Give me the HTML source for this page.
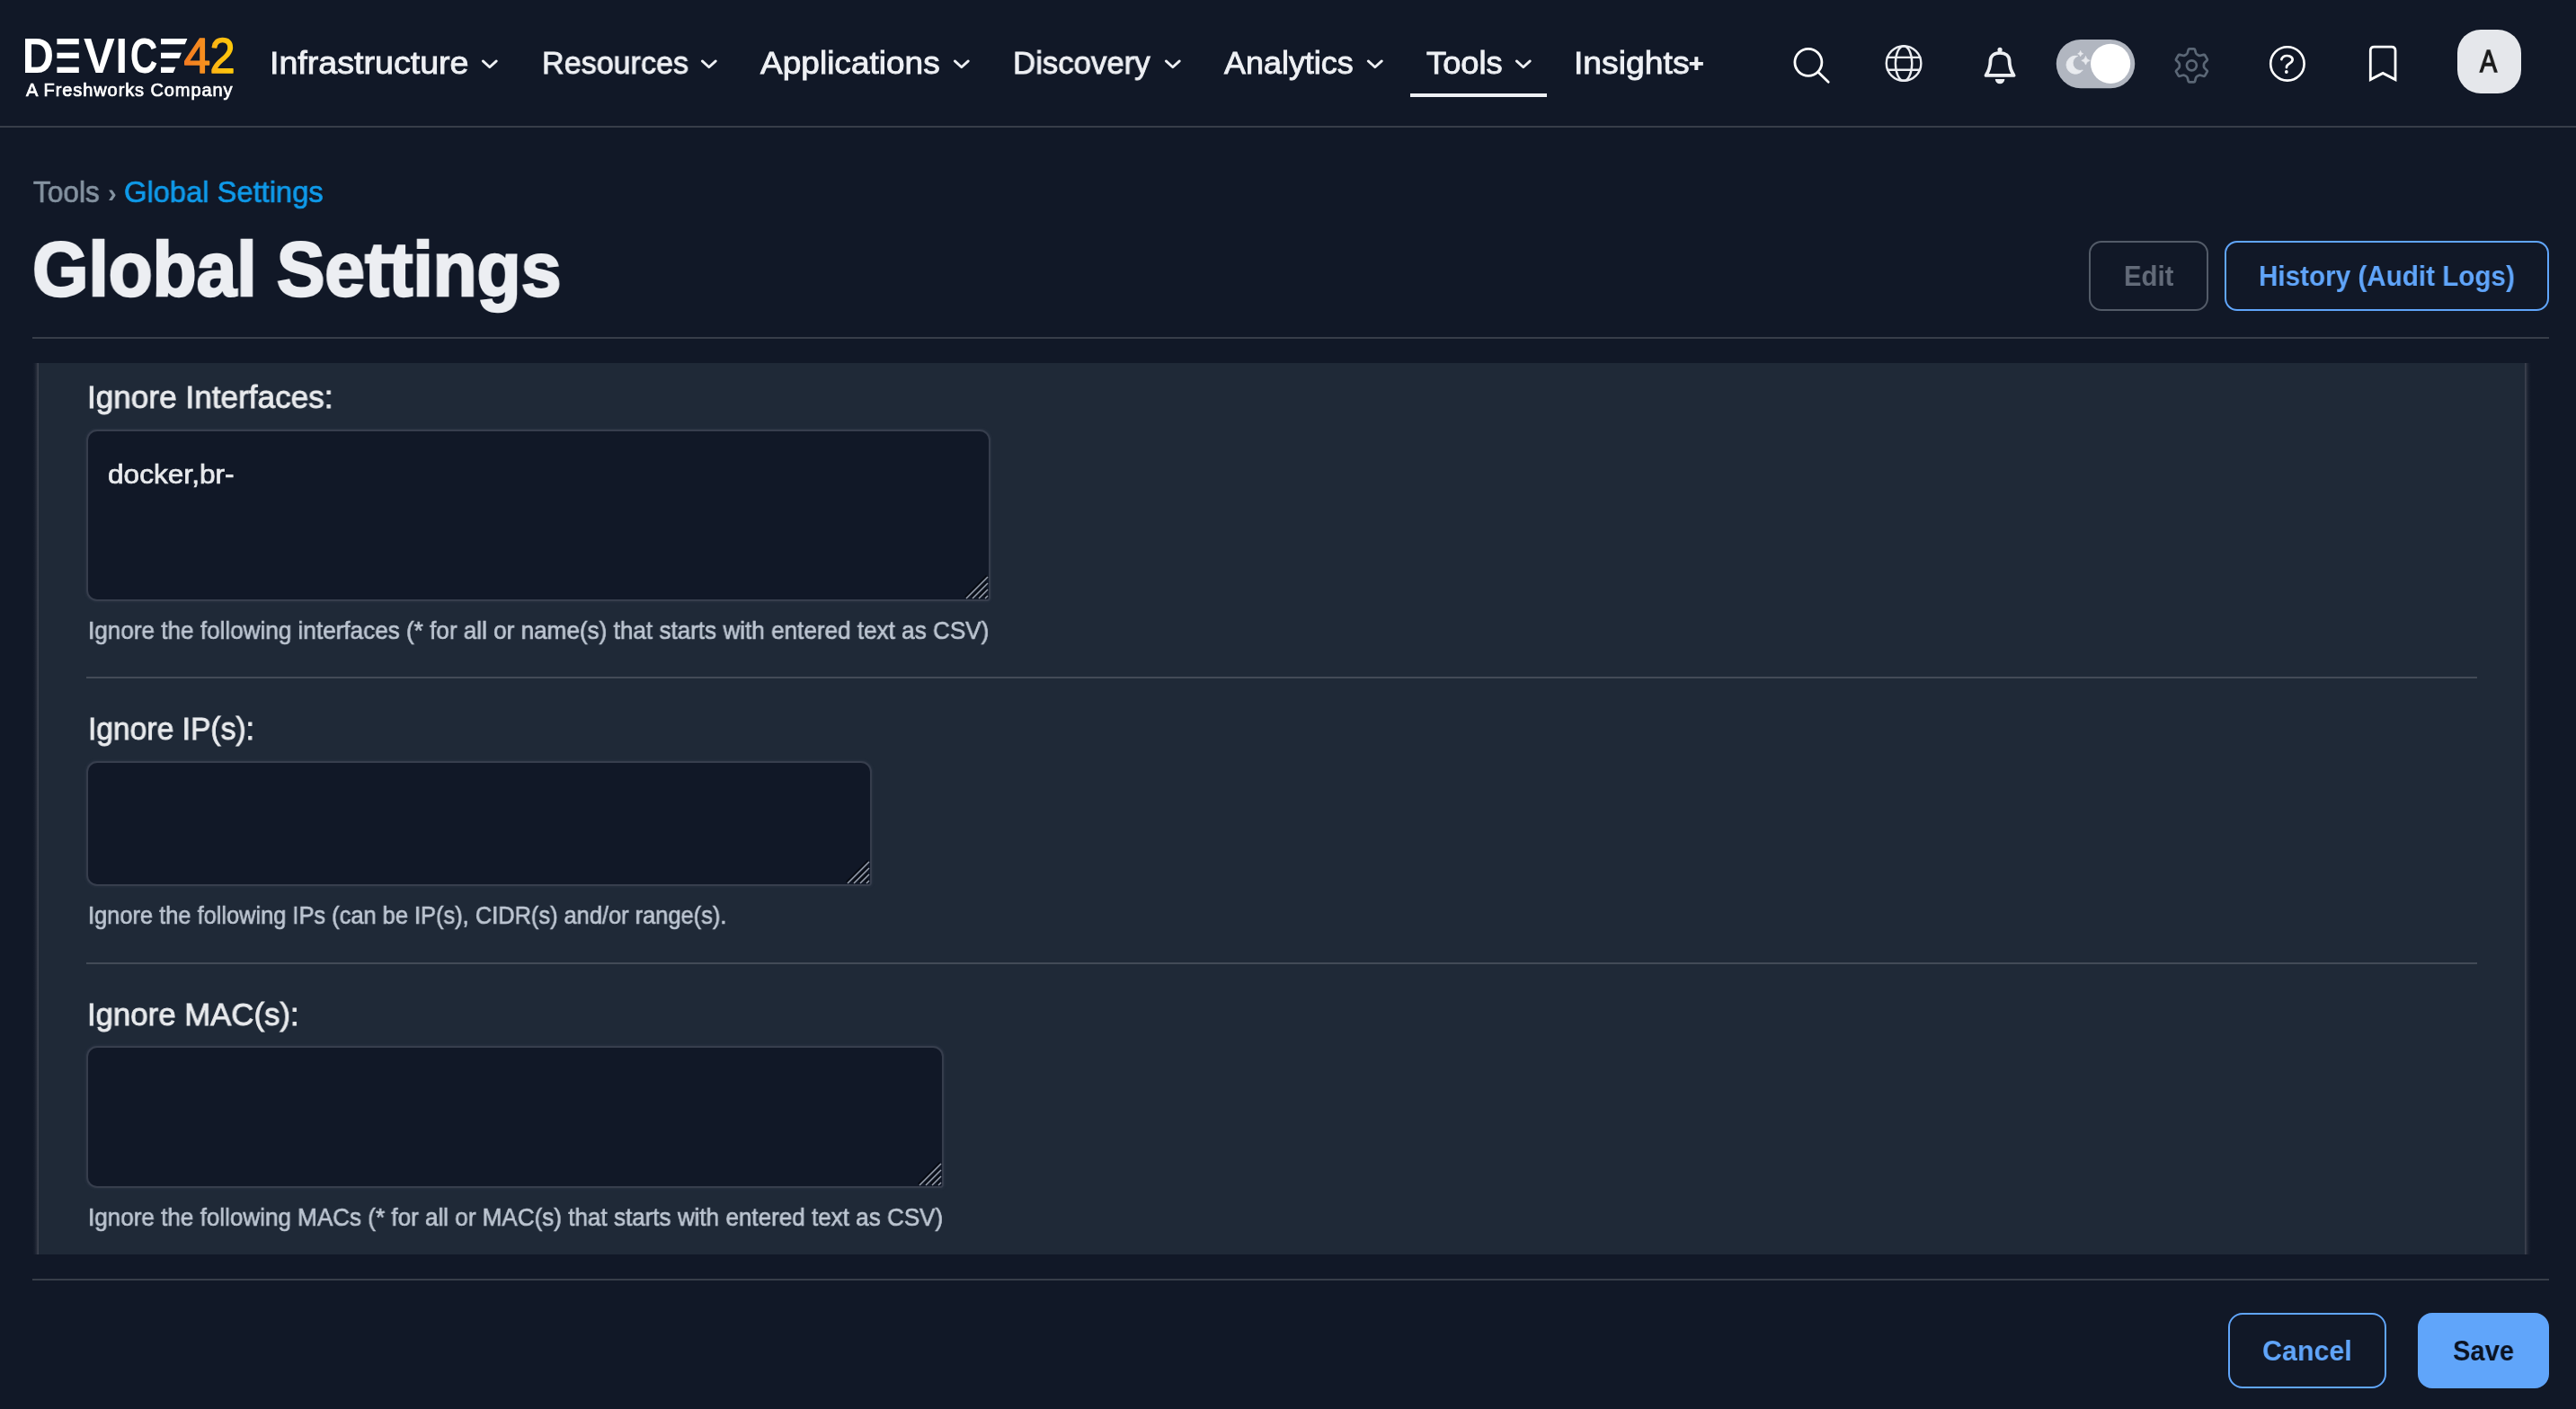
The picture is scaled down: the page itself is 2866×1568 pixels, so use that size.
<!DOCTYPE html><html lang="en"><head><meta charset="utf-8"><title>Global Settings</title><style>
*{box-sizing:border-box;margin:0;padding:0}
html,body{width:2866px;height:1568px;overflow:hidden;background:#111827;font-family:"Liberation Sans", Arial, sans-serif;}
body{position:relative}
.t{position:absolute;white-space:nowrap;line-height:1;transform-origin:0 50%;will-change:transform;}
.abs{position:absolute}
.hr{position:absolute;height:2px;background:rgba(255,255,255,.16)}
.ta{position:absolute;background:#111827;border-radius:10px 10px 2px 10px;box-shadow:0 0 0 1.9px #373e4d,0 0 3.5px 1.8px rgba(110,122,145,.2)}
.btn{position:absolute;border-radius:14px;border:2px solid #60a5fa}
svg{position:absolute;overflow:visible}
header,nav,main,section,form,footer{display:contents}
a{text-decoration:none}
</style></head><body>
<header>
<div class="hr" style="left:0;top:140px;width:2866px"></div>
<svg width="300" height="130" role="img" aria-label="DEVICE42" style="left:0;top:0" font-family='"Liberation Sans", Arial, sans-serif' font-weight="700" font-size="56" fill="#fff"><defs><clipPath id="ce1"><rect x="63.4" y="40" width="24.4" height="43"/></clipPath><clipPath id="ce2"><polygon points="179,40 209.6,40 191.9,83 179,83"/></clipPath><linearGradient id="g4" x1="0" y1="0" x2="1" y2="0"><stop offset="0" stop-color="#f37a22"/><stop offset="1" stop-color="#f7951d"/></linearGradient><linearGradient id="g2" x1="0" y1="0" x2="1" y2="0"><stop offset="0" stop-color="#fbb017"/><stop offset="1" stop-color="#ffcb08"/></linearGradient></defs><g><text transform="translate(24.66,81) scale(.87,1)">D</text><g clip-path="url(#ce1)"><text transform="translate(46.8,81) scale(1.3,1)">E</text></g><text transform="translate(92.9,81) scale(.93,1)">V</text><text transform="translate(128.56,81) scale(.87,1)">I</text><text transform="translate(144.7,81) scale(.76,1)">C</text><g clip-path="url(#ce2)"><text transform="translate(160,81) scale(1.5,1)">E</text></g><text transform="translate(204.6,81) scale(.95,1)" font-weight="400" fill="url(#g4)" stroke="url(#g4)" stroke-width="1.5" stroke-linejoin="round">4</text><text transform="translate(233.6,81) scale(.9,1)" font-weight="400" fill="url(#g2)" stroke="url(#g2)" stroke-width="1.5" stroke-linejoin="round">2</text></g></svg>
<span class="t" style="left:28.75px;top:90.00px;font-size:20px;font-weight:400;color:#ffffff;-webkit-text-stroke:0.7px #ffffff;letter-spacing:0.907px;">A Freshworks Company</span>
<nav aria-label="Main">
<a class="t" style="left:299.98px;top:53.00px;font-size:35.5px;font-weight:400;color:#eef0f4;-webkit-text-stroke:0.9px #eef0f4;transform:scaleX(1.0593);">Infrastructure</a>
<svg width="20" height="12" style="left:536px;top:64px"><polyline points="1.3,3.9 8.8,10.8 16.3,3.9" fill="none" stroke="#eef0f4" stroke-width="2.8" stroke-linecap="round" stroke-linejoin="round"/></svg>
<a class="t" style="left:602.59px;top:53.00px;font-size:35.5px;font-weight:400;color:#eef0f4;-webkit-text-stroke:0.9px #eef0f4;transform:scaleX(0.9605);">Resources</a>
<svg width="20" height="12" style="left:780px;top:64px"><polyline points="1.3,3.9 8.8,10.8 16.3,3.9" fill="none" stroke="#eef0f4" stroke-width="2.8" stroke-linecap="round" stroke-linejoin="round"/></svg>
<a class="t" style="left:846.17px;top:53.00px;font-size:35.5px;font-weight:400;color:#eef0f4;-webkit-text-stroke:0.9px #eef0f4;transform:scaleX(1.0434);">Applications</a>
<svg width="20" height="12" style="left:1061px;top:64px"><polyline points="1.3,3.9 8.8,10.8 16.3,3.9" fill="none" stroke="#eef0f4" stroke-width="2.8" stroke-linecap="round" stroke-linejoin="round"/></svg>
<a class="t" style="left:1127.05px;top:53.00px;font-size:35.5px;font-weight:400;color:#eef0f4;-webkit-text-stroke:0.9px #eef0f4;transform:scaleX(0.9797);">Discovery</a>
<svg width="20" height="12" style="left:1296px;top:64px"><polyline points="1.3,3.9 8.8,10.8 16.3,3.9" fill="none" stroke="#eef0f4" stroke-width="2.8" stroke-linecap="round" stroke-linejoin="round"/></svg>
<a class="t" style="left:1362.16px;top:53.00px;font-size:35.5px;font-weight:400;color:#eef0f4;-webkit-text-stroke:0.9px #eef0f4;transform:scaleX(1.0117);">Analytics</a>
<svg width="20" height="12" style="left:1520.5px;top:64px"><polyline points="1.3,3.9 8.8,10.8 16.3,3.9" fill="none" stroke="#eef0f4" stroke-width="2.8" stroke-linecap="round" stroke-linejoin="round"/></svg>
<a class="t" style="left:1587.03px;top:53.00px;font-size:35.5px;font-weight:400;color:#eef0f4;-webkit-text-stroke:0.9px #eef0f4;transform:scaleX(1.0229);">Tools</a>
<svg width="20" height="12" style="left:1686px;top:64px"><polyline points="1.3,3.9 8.8,10.8 16.3,3.9" fill="none" stroke="#eef0f4" stroke-width="2.8" stroke-linecap="round" stroke-linejoin="round"/></svg>
<a class="t" style="left:1751.00px;top:53.00px;font-size:35.5px;font-weight:400;color:#eef0f4;-webkit-text-stroke:0.9px #eef0f4;transform:scaleX(1.0505);">Insights<span style="font-size:.72em;position:relative;top:-3px;-webkit-text-stroke-width:1.9px">+</span></a>
<div class="abs" style="left:1569px;top:104px;width:152px;height:4px;background:#eef0f4"></div>
</nav>
<svg width="2866" height="140" style="left:0;top:0" fill="none" stroke-linecap="round" stroke-linejoin="round"><circle cx="2011.9" cy="69.3" r="15" stroke="#ffffff" stroke-width="2.8"/><line x1="2022.6" y1="80" x2="2034.2" y2="91.2" stroke="#ffffff" stroke-width="2.8"/><g stroke="#eceef2" stroke-width="2.4"><circle cx="2118.05" cy="70.5" r="19.3"/><ellipse cx="2118.05" cy="70.5" rx="9.2" ry="19.3"/><line x1="2099.91" y1="63.9" x2="2136.19" y2="63.9"/><line x1="2100.14" y1="77.7" x2="2135.96" y2="77.7"/></g><path d="M2209.5 83.9 C2212.6 79 2214.4 74 2214.5 68 C2214.5 62 2219 58.9 2225.05 58.9 C2231.1 58.9 2235.6 62 2235.6 68 C2235.7 74 2237.5 79 2240.6 83.9 Z" stroke="#eceef2" stroke-width="3.8"/><circle cx="2225.05" cy="55.4" r="2.6" fill="#eceef2"/><path d="M2219.8 88 A5.25 5.25 0 0 0 2230.3 88 Z" fill="#eceef2"/><rect x="2287.75" y="43.9" width="87.5" height="54.3" rx="27.15" fill="#b1b6c0"/><circle cx="2348.15" cy="70.9" r="22.1" fill="#fff"/><path d="M2311.35 62.39 A10.08 10.08 0 1 0 2317.30 77.99 A8.35 8.35 0 0 1 2311.35 62.39 Z" fill="#e9ebef" stroke="#e9ebef" stroke-width="0.8" stroke-linejoin="round"/><path d="M2314.66 56.8 Q2315.17 59.29 2317.66 59.8 Q2315.17 60.31 2314.66 62.8 Q2314.15 60.31 2311.66 59.8 Q2314.15 59.29 2314.66 56.8 Z" fill="#e9ebef" stroke="#e9ebef" stroke-width="0.7" stroke-linejoin="round"/><path d="M2320.5 62.7 Q2321.30 66.60 2325.2 67.4 Q2321.30 68.20 2320.5 72.10000000000001 Q2319.70 68.20 2315.8 67.4 Q2319.70 66.60 2320.5 62.7 Z" fill="#e9ebef" stroke="#e9ebef" stroke-width="0.7" stroke-linejoin="round"/><path d="M2444.44 60.66 Q2443.31 60.01 2442.98 58.75 L2442.08 55.28 Q2441.83 54.31 2440.83 54.31 L2435.97 54.31 Q2434.97 54.31 2434.72 55.28 L2433.82 58.75 Q2433.49 60.01 2432.36 60.66 L2430.90 61.50 Q2429.78 62.15 2428.52 61.81 L2425.07 60.86 Q2424.10 60.59 2423.60 61.46 L2421.18 65.66 Q2420.68 66.52 2421.39 67.23 L2423.94 69.74 Q2424.87 70.66 2424.87 71.96 L2424.87 73.64 Q2424.87 74.94 2423.94 75.86 L2421.39 78.37 Q2420.68 79.08 2421.18 79.94 L2423.60 84.14 Q2424.10 85.01 2425.07 84.74 L2428.52 83.79 Q2429.78 83.45 2430.90 84.10 L2432.36 84.94 Q2433.49 85.59 2433.82 86.85 L2434.72 90.32 Q2434.97 91.29 2435.97 91.29 L2440.83 91.29 Q2441.83 91.29 2442.08 90.32 L2442.98 86.85 Q2443.31 85.59 2444.44 84.94 L2445.90 84.10 Q2447.02 83.45 2448.28 83.79 L2451.73 84.74 Q2452.70 85.01 2453.20 84.14 L2455.62 79.94 Q2456.12 79.08 2455.41 78.37 L2452.86 75.86 Q2451.93 74.94 2451.93 73.64 L2451.93 71.96 Q2451.93 70.66 2452.86 69.74 L2455.41 67.23 Q2456.12 66.52 2455.62 65.66 L2453.20 61.46 Q2452.70 60.59 2451.73 60.86 L2448.28 61.81 Q2447.02 62.15 2445.90 61.50 Z" stroke="#5b6776" stroke-width="2.7"/><circle cx="2438.4" cy="72.8" r="5.5" stroke="#5b6776" stroke-width="2.7"/><circle cx="2544.9" cy="70.9" r="18.7" stroke="#ffffff" stroke-width="2.6"/><g transform="translate(2544.5,71.28) scale(.11,.0947) translate(-256,-256)"><path vector-effect="non-scaling-stroke" d="M200 202.29s.84-17.5 19.57-32.57C230.68 160.77 244 158.18 256 158c10.93-.14 20.69 1.67 26.53 4.45 10 4.76 29.47 16.38 29.47 41.09 0 26-17 37.81-36.37 50.8S251 281.43 251 296" stroke="#ffffff" stroke-width="2.7"/><ellipse cx="250" cy="348" rx="17" ry="20" fill="#ffffff"/></g><path d="M2637.3 88.6 L2637.3 56.3 Q2637.3 52.1 2641.5 52.1 L2660.8 52.1 Q2665 52.1 2665 56.3 L2665 88.6 L2651.15 81.4 Z" stroke="#ffffff" stroke-width="2.8" stroke-linejoin="miter"/><rect x="2734" y="33" width="71" height="71" rx="26" fill="#e5e7eb"/></svg>
<span class="t" style="left:2758.64px;top:50.00px;font-size:35px;font-weight:400;color:#1b1b1b;-webkit-text-stroke:1.3px #1b1b1b;transform:scaleX(0.8187);">A</span>
</header>
<main>
<nav aria-label="Breadcrumb">
<a class="t" style="left:36.82px;top:197.00px;font-size:33px;font-weight:400;color:#8593a1;-webkit-text-stroke:0.7px #8593a1;transform:scaleX(0.9572);">Tools</a>
<span class="t" style="left:119.62px;top:201.00px;font-size:29px;font-weight:700;color:#8593a1;transform:scaleX(1.0083);">&#8250;</span>
<a class="t" style="left:138.28px;top:197.00px;font-size:33px;font-weight:400;color:#0f9aea;-webkit-text-stroke:0.7px #0f9aea;transform:scaleX(0.9907);">Global Settings</a>
</nav>
<h1 class="t" style="left:36.33px;top:256.00px;font-size:86px;font-weight:700;color:#eceef2;-webkit-text-stroke:2.6px #eceef2;transform:scaleX(0.9327);">Global Settings</h1>
<div class="btn" role="button" aria-disabled="true" style="left:2324px;top:268px;width:133px;height:78px;border-color:#535b68"></div>
<span class="t" style="left:2363.12px;top:291.00px;font-size:32px;font-weight:700;color:#636b79;transform:scaleX(0.9162);">Edit</span>
<div class="btn" role="button" style="left:2475px;top:268px;width:361px;height:78px"></div>
<span class="t" style="left:2513.10px;top:291.00px;font-size:32px;font-weight:700;color:#60a5fa;transform:scaleX(0.9261);">History (Audit Logs)</span>
<div class="hr" style="left:36px;top:375px;width:2800px"></div>
<div class="abs" style="left:43.25px;top:404px;width:2765.5px;height:992px;background:#1f2937"></div>
<div class="abs" style="left:36px;top:404px;width:7.25px;height:992px;background:linear-gradient(90deg,#111827 0,#171e2d 2.5px,#262c3a 4.8px,#3c414e 6px,#3c414e 7.25px)"></div>
<div class="abs" style="left:2808.75px;top:404px;width:7.25px;height:992px;background:linear-gradient(270deg,#111827 0,#171e2d 2.5px,#262c3a 4.8px,#3c414e 6px,#3c414e 7.25px)"></div>
<form>
<section>
<label class="t" style="left:97.07px;top:425.00px;font-size:35.5px;font-weight:400;color:#e8eaed;-webkit-text-stroke:0.9px #e8eaed;transform:scaleX(0.9898);">Ignore Interfaces:</label>
<div class="ta" role="textbox" aria-multiline="true" style="left:98px;top:480px;width:1002px;height:187px"><svg width="28" height="28" style="right:0;bottom:0" stroke-width="1.35" stroke-linecap="butt"><g stroke="#07090f"><line x1="1.6" y1="25.6" x2="25.6" y2="1.6"/><line x1="8.6" y1="25.6" x2="25.6" y2="8.6"/><line x1="15.6" y1="25.6" x2="25.6" y2="15.6"/><line x1="22.6" y1="25.6" x2="25.6" y2="22.6"/></g><g stroke="#9ba1ae"><line x1="3" y1="27" x2="27" y2="3"/><line x1="10" y1="27" x2="27" y2="10"/><line x1="17" y1="27" x2="27" y2="17"/><line x1="24" y1="27" x2="27" y2="24"/></g></svg></div>
<span class="t" style="left:120.06px;top:513.00px;font-size:30px;font-weight:400;color:#e8eaed;-webkit-text-stroke:0.7px #e8eaed;transform:scaleX(1.0536);">docker,br-</span>
<p class="t" style="left:97.56px;top:688.00px;font-size:28px;font-weight:400;color:#bcc5d1;-webkit-text-stroke:0.65px #bcc5d1;transform:scaleX(0.9321);">Ignore the following interfaces (* for all or name(s) that starts with entered text as CSV)</p>
</section>
<div class="hr" style="left:96px;top:753px;width:2660px"></div>
<section>
<label class="t" style="left:97.50px;top:794.00px;font-size:35.5px;font-weight:400;color:#e8eaed;-webkit-text-stroke:0.9px #e8eaed;transform:scaleX(0.9465);">Ignore IP(s):</label>
<div class="ta" role="textbox" aria-multiline="true" style="left:98px;top:849px;width:870px;height:135px"><svg width="28" height="28" style="right:0;bottom:0" stroke-width="1.35" stroke-linecap="butt"><g stroke="#07090f"><line x1="1.6" y1="25.6" x2="25.6" y2="1.6"/><line x1="8.6" y1="25.6" x2="25.6" y2="8.6"/><line x1="15.6" y1="25.6" x2="25.6" y2="15.6"/><line x1="22.6" y1="25.6" x2="25.6" y2="22.6"/></g><g stroke="#9ba1ae"><line x1="3" y1="27" x2="27" y2="3"/><line x1="10" y1="27" x2="27" y2="10"/><line x1="17" y1="27" x2="27" y2="17"/><line x1="24" y1="27" x2="27" y2="24"/></g></svg></div>
<p class="t" style="left:97.61px;top:1005.00px;font-size:28px;font-weight:400;color:#bcc5d1;-webkit-text-stroke:0.65px #bcc5d1;transform:scaleX(0.9075);">Ignore the following IPs (can be IP(s), CIDR(s) and/or range(s).</p>
</section>
<div class="hr" style="left:96px;top:1071px;width:2660px"></div>
<section>
<label class="t" style="left:97.41px;top:1112.00px;font-size:35.5px;font-weight:400;color:#e8eaed;-webkit-text-stroke:0.9px #e8eaed;transform:scaleX(0.9791);">Ignore MAC(s):</label>
<div class="ta" role="textbox" aria-multiline="true" style="left:98px;top:1166px;width:950px;height:154px"><svg width="28" height="28" style="right:0;bottom:0" stroke-width="1.35" stroke-linecap="butt"><g stroke="#07090f"><line x1="1.6" y1="25.6" x2="25.6" y2="1.6"/><line x1="8.6" y1="25.6" x2="25.6" y2="8.6"/><line x1="15.6" y1="25.6" x2="25.6" y2="15.6"/><line x1="22.6" y1="25.6" x2="25.6" y2="22.6"/></g><g stroke="#9ba1ae"><line x1="3" y1="27" x2="27" y2="3"/><line x1="10" y1="27" x2="27" y2="10"/><line x1="17" y1="27" x2="27" y2="17"/><line x1="24" y1="27" x2="27" y2="24"/></g></svg></div>
<p class="t" style="left:97.56px;top:1341.00px;font-size:28px;font-weight:400;color:#bcc5d1;-webkit-text-stroke:0.65px #bcc5d1;transform:scaleX(0.9304);">Ignore the following MACs (* for all or MAC(s) that starts with entered text as CSV)</p>
</section>
</form>
<footer>
<div class="hr" style="left:36px;top:1423px;width:2800px"></div>
<div class="btn" role="button" style="left:2479px;top:1461px;width:176px;height:84px;border-radius:16px"></div>
<span class="t" style="left:2517.48px;top:1487.00px;font-size:32px;font-weight:700;color:#60a5fa;transform:scaleX(0.9504);">Cancel</span>
<div class="btn" role="button" style="left:2690px;top:1461px;width:146px;height:84px;border-radius:16px;background:#60a5fa"></div>
<span class="t" style="left:2729.15px;top:1487.00px;font-size:32px;font-weight:700;color:#0b1220;transform:scaleX(0.9096);">Save</span>
</footer>
</main>
</body></html>
